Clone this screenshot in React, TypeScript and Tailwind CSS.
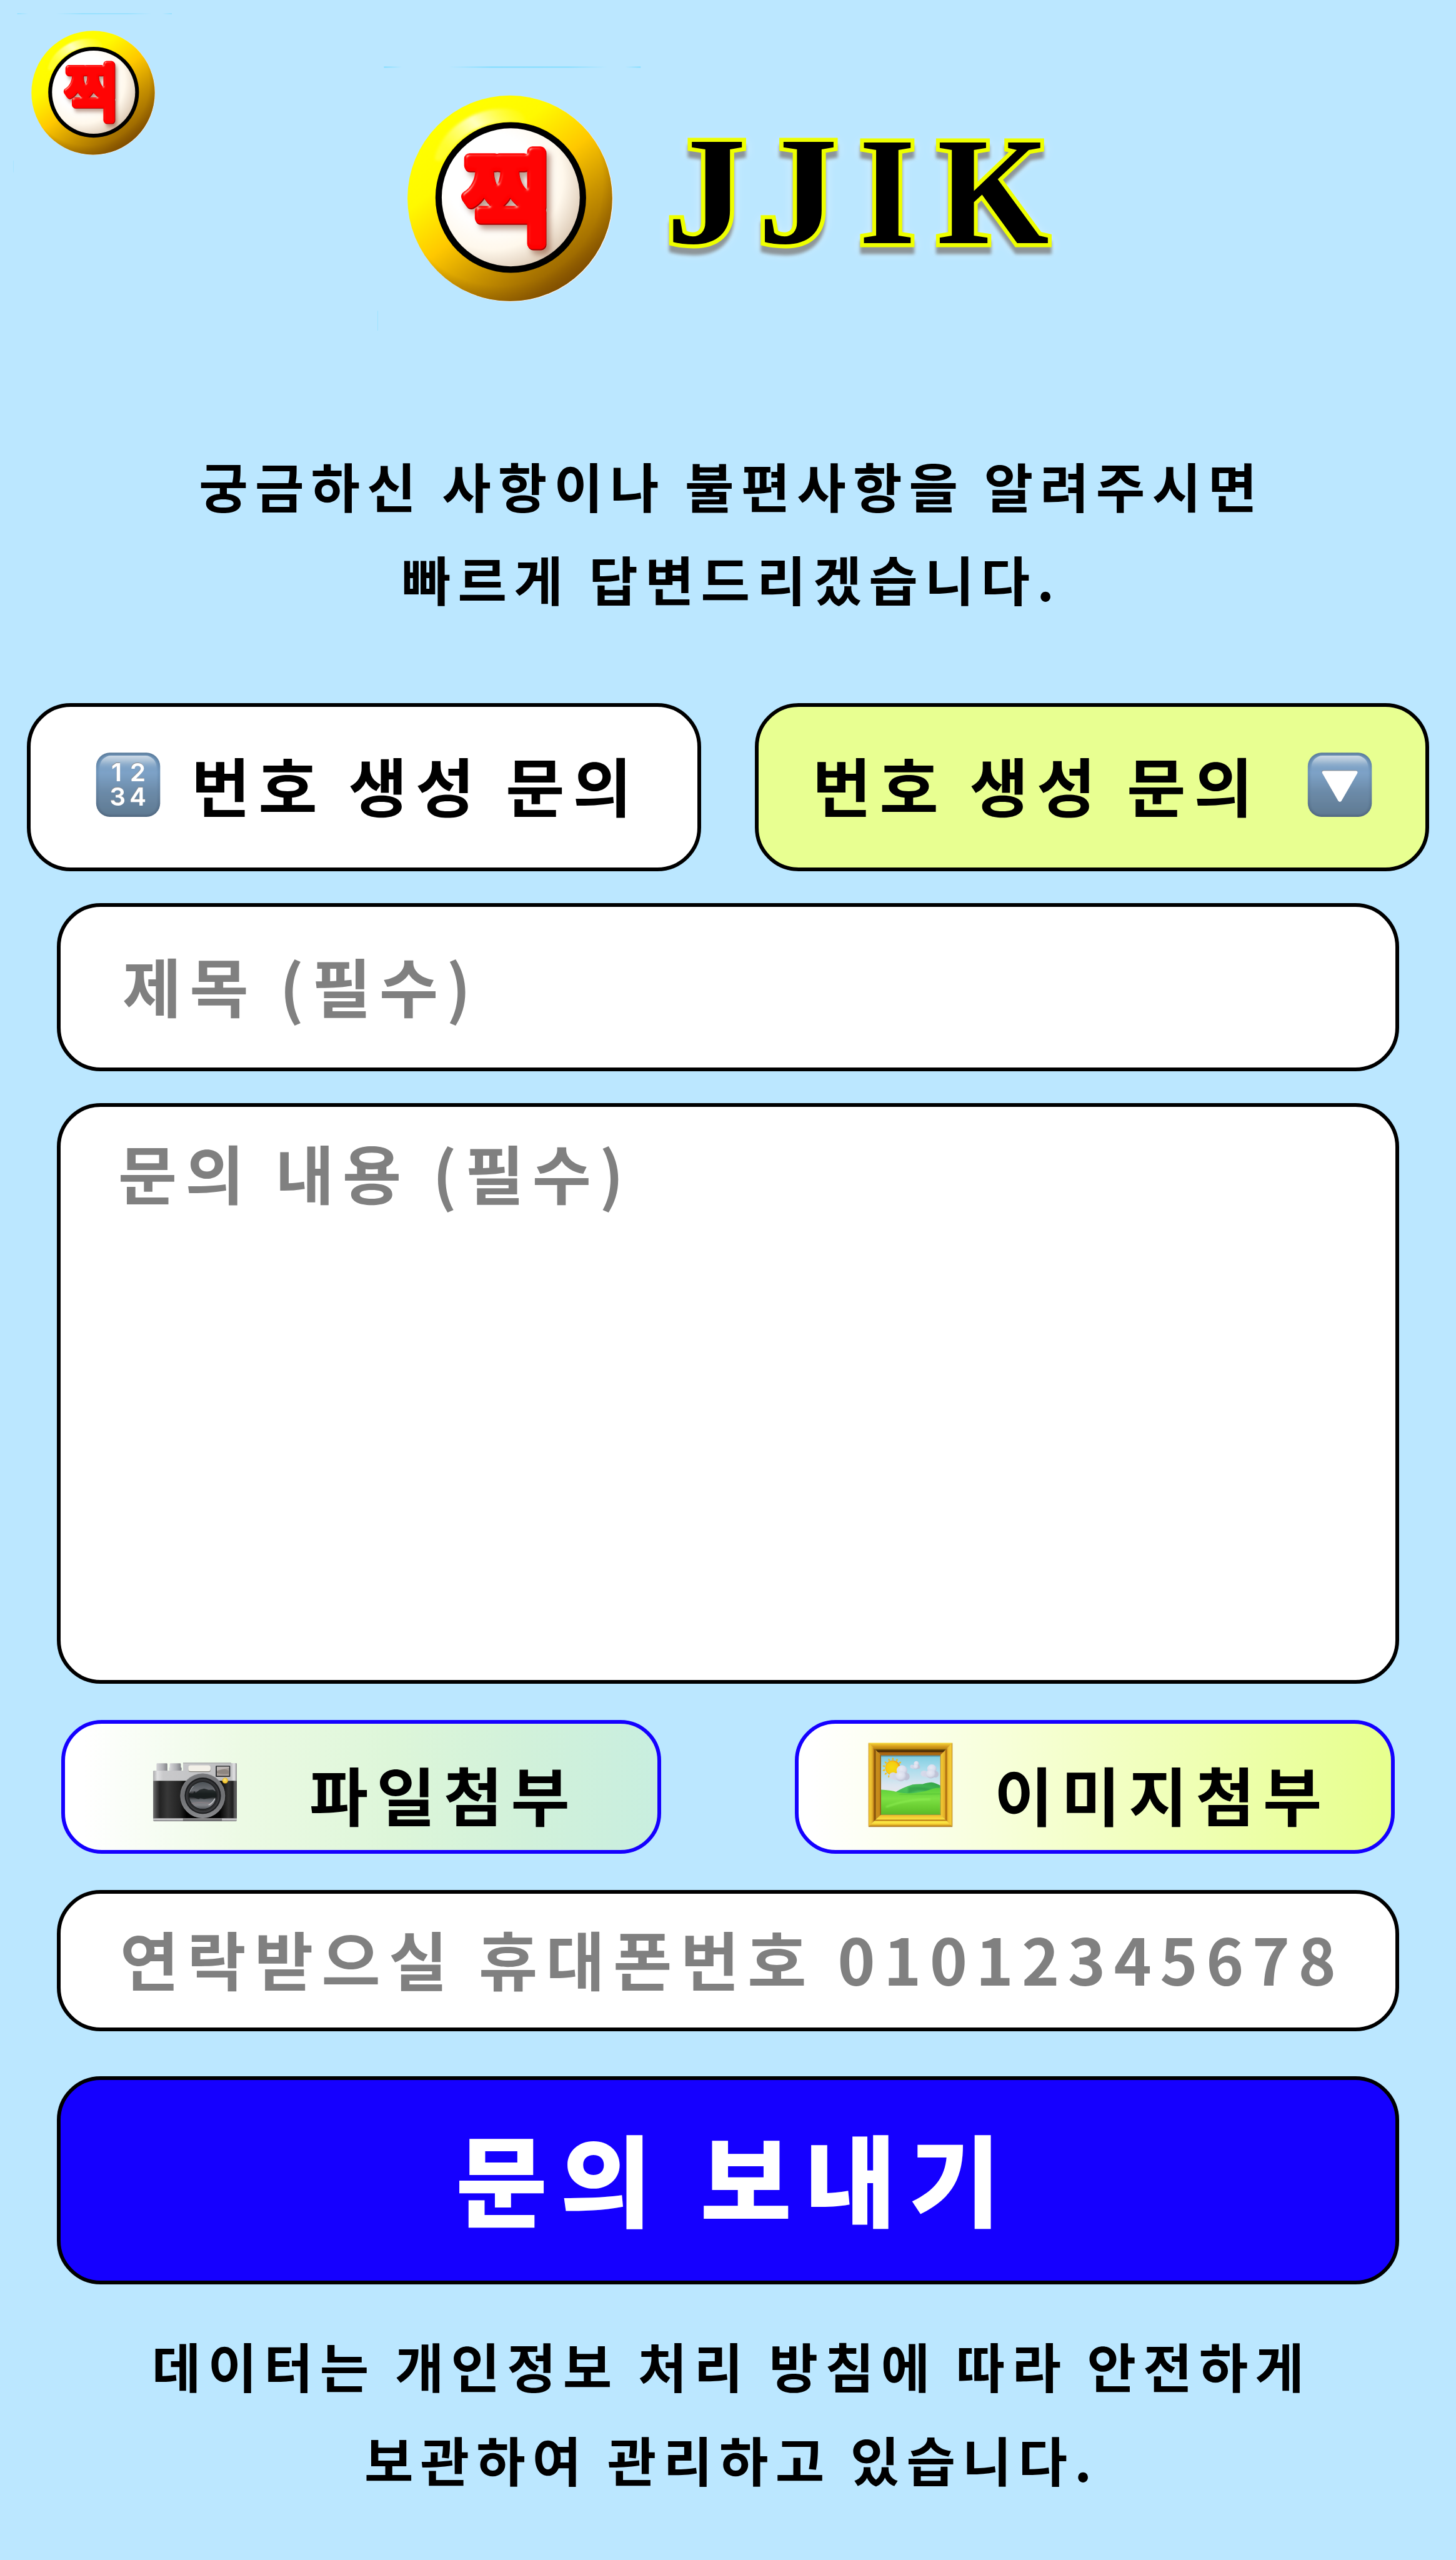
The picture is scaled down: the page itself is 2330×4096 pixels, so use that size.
import type { ReactNode } from "react";

function BallLogo({ id, className }: { id: string; className: string }) {
  return (
    <svg viewBox="0 0 1568 1568" className={className}>
      <defs>
        <linearGradient id={`${id}-body`} x1="0.2" y1="0.1" x2="0.82" y2="0.92">
          <stop offset="0" stopColor="#ffff00" />
          <stop offset="0.24" stopColor="#fff900" />
          <stop offset="0.48" stopColor="#ffc800" />
          <stop offset="0.7" stopColor="#c89200" />
          <stop offset="0.88" stopColor="#a06c00" />
          <stop offset="1" stopColor="#7d4a00" />
        </linearGradient>
        <radialGradient id={`${id}-edge`} cx="0.45" cy="0.42" r="0.6">
          <stop offset="0.84" stopColor="#7a4a00" stopOpacity="0" />
          <stop offset="1" stopColor="#7a4a00" stopOpacity="0.5" />
        </radialGradient>
        <linearGradient id={`${id}-shine`} x1="0" y1="0.5" x2="1" y2="0">
          <stop offset="0" stopColor="#ffff80" stopOpacity="0.35" />
          <stop offset="0.45" stopColor="#ffffc8" stopOpacity="0.95" />
          <stop offset="1" stopColor="#ffff60" stopOpacity="0" />
        </linearGradient>
        <radialGradient id={`${id}-disc`} cx="0.36" cy="0.36" r="0.72">
          <stop offset="0.45" stopColor="#ffffff" />
          <stop offset="0.72" stopColor="#fff8ec" />
          <stop offset="1" stopColor="#d9c5b0" />
        </radialGradient>
        <linearGradient id={`${id}-line`} x1="0" y1="0" x2="1" y2="0">
          <stop offset="0" stopColor="#7adcff" />
          <stop offset="0.07" stopColor="#7adcff" stopOpacity="0" />
          <stop offset="0.25" stopColor="#7adcff" stopOpacity="0" />
          <stop offset="0.42" stopColor="#7adcff" />
          <stop offset="0.72" stopColor="#7adcff" stopOpacity="0.9" />
          <stop offset="0.87" stopColor="#7adcff" stopOpacity="0" />
          <stop offset="0.94" stopColor="#7adcff" stopOpacity="0" />
          <stop offset="1" stopColor="#7adcff" />
        </linearGradient>
        <filter id={`${id}-soft`} x="-30%" y="-30%" width="160%" height="160%">
          <feGaussianBlur stdDeviation="9" />
        </filter>
        <filter id={`${id}-bevel`} x="-20%" y="-20%" width="150%" height="150%" colorInterpolationFilters="sRGB">
          <feGaussianBlur in="SourceAlpha" stdDeviation="22" result="far" />
          <feOffset in="far" dx="30" dy="42" result="farOff" />
          <feFlood floodColor="#7a3a20" floodOpacity="0.5" result="brown" />
          <feComposite in="brown" in2="farOff" operator="in" result="shadow" />
          <feOffset in="SourceAlpha" dx="5" dy="8" result="sideOff" />
          <feFlood floodColor="#a80000" result="dark" />
          <feComposite in="dark" in2="sideOff" operator="in" result="side" />
          <feGaussianBlur in="SourceAlpha" stdDeviation="12" result="b" />
          <feSpecularLighting in="b" surfaceScale="14" specularConstant="0.9" specularExponent="34" lightingColor="#ffd8c8" result="s">
            <feDistantLight azimuth="232" elevation="38" />
          </feSpecularLighting>
          <feComposite in="s" in2="SourceAlpha" operator="in" result="si" />
          <feComposite in="SourceGraphic" in2="si" operator="arithmetic" k1="0" k2="1" k3="0.8" k4="0" result="lit" />
          <feMerge>
            <feMergeNode in="shadow" />
            <feMergeNode in="side" />
            <feMergeNode in="lit" />
          </feMerge>
        </filter>
      </defs>
      <rect x="-114" y="-167" width="1830" height="8" fill={`url(#${id}-line)`} />
      <rect x="-160" y="1575" width="4" height="140" fill="#8fdfff" opacity="0.7" />
      <ellipse cx="788" cy="775" rx="731" ry="734" fill="#fff4ee" />
      <ellipse cx="784" cy="772" rx="730" ry="733" fill={`url(#${id}-body)`} />
      <ellipse cx="784" cy="772" rx="730" ry="733" fill={`url(#${id}-edge)`} />
      <path
        d="M250 480C290 290 520 130 740 132C850 134 900 170 890 236C700 212 500 250 370 420C330 480 300 510 270 505C250 500 246 495 250 480Z"
        fill={`url(#${id}-shine)`}
        filter={`url(#${id}-soft)`}
      />
      <circle cx="790" cy="766" r="537" fill="#000" />
      <circle cx="790" cy="765" r="492" fill={`url(#${id}-disc)`} />
      <text
        transform="translate(764 1036) scale(0.97 1)"
        fontFamily='"Noto Sans CJK KR", sans-serif'
        fontWeight="400"
        fontSize="720"
        letterSpacing="0"
        textAnchor="middle"
        fill="#ff0000"
        stroke="#ff0000"
        strokeWidth="78"
        strokeLinejoin="round"
        strokeLinecap="round"
        filter={`url(#${id}-bevel)`}
      >
        찍
      </text>
    </svg>
  );
}

function Wordmark({ className }: { className: string }) {
  return (
    <svg viewBox="0 0 1400 600" className={className}>
      <defs>
        <filter id="wm-depth" x="-10%" y="-20%" width="120%" height="150%" colorInterpolationFilters="sRGB">
          <feGaussianBlur in="SourceAlpha" stdDeviation="16" result="g" />
          <feOffset in="g" dy="14" result="go" />
          <feFlood floodColor="#ffffff" floodOpacity="0.5" result="white" />
          <feComposite in="white" in2="go" operator="in" result="glow" />
          <feGaussianBlur in="SourceAlpha" stdDeviation="5" result="d" />
          <feOffset in="d" dy="21" result="do" />
          <feFlood floodColor="#777777" floodOpacity="0.75" result="gray" />
          <feComposite in="gray" in2="do" operator="in" result="drop" />
          <feMerge>
            <feMergeNode in="glow" />
            <feMergeNode in="drop" />
            <feMergeNode in="SourceGraphic" />
          </feMerge>
        </filter>
      </defs>
      <g
        filter="url(#wm-depth)"
        fontFamily='"Liberation Serif", "Times New Roman", serif'
        fontWeight="700"
        fontSize="458"
        letterSpacing="0"
        fill="#000"
        stroke="#eeff00"
        strokeWidth="24"
        strokeMiterlimit="6"
        paintOrder="stroke"
      >
        <text transform="translate(99 428.5) scale(1.05 1.01)">J</text>
        <text transform="translate(374 428.5) scale(1.05 1.01)">J</text>
        <text transform="translate(678 428.5) scale(0.95 1.01)">I</text>
        <text transform="translate(913 428.5) scale(0.94 1.01)">K</text>
      </g>
    </svg>
  );
}

function KeyTile({ id, className, children }: { id: string; className: string; children: ReactNode }) {
  return (
    <svg viewBox="0 0 690 690" className={className}>
      <defs>
        <linearGradient id={`${id}-base`} x1="0" y1="0" x2="0" y2="1">
          <stop offset="0" stopColor="#5b7c9c" />
          <stop offset="0.3" stopColor="#6d93b9" />
          <stop offset="0.65" stopColor="#627f9c" />
          <stop offset="1" stopColor="#4f677f" />
        </linearGradient>
        <linearGradient id={`${id}-face`} x1="0" y1="0" x2="0" y2="1">
          <stop offset="0" stopColor="#7298bc" />
          <stop offset="0.3" stopColor="#7da2c7" />
          <stop offset="0.6" stopColor="#6c8ba9" />
          <stop offset="1" stopColor="#5f7a92" />
        </linearGradient>
        <linearGradient id={`${id}-gloss`} x1="0" y1="0" x2="0" y2="1">
          <stop offset="0" stopColor="#cddae7" />
          <stop offset="0.35" stopColor="#b4c8db" stopOpacity="0.85" />
          <stop offset="1" stopColor="#7da2c7" stopOpacity="0" />
        </linearGradient>
        <filter id={`${id}-blur`}>
          <feGaussianBlur stdDeviation="9" />
        </filter>
        <filter id={`${id}-inset`} x="-10%" y="-10%" width="120%" height="120%">
          <feDropShadow dx="-2" dy="-6" stdDeviation="1" floodColor="#8d8d8d" />
        </filter>
      </defs>
      <rect x="55" y="52" width="575" height="576" rx="122" fill={`url(#${id}-base)`} />
      <rect x="76" y="72" width="533" height="540" rx="104" fill={`url(#${id}-face)`} filter={`url(#${id}-blur)`} />
      <path d="M88 215V180A100 102 0 0 1 188 79H497A100 102 0 0 1 597 180V215Z" fill={`url(#${id}-gloss)`} />
      <g fill="#fff" filter={`url(#${id}-inset)`}>
        {children}
      </g>
    </svg>
  );
}

function NumbersIcon({ className }: { className: string }) {
  return (
    <KeyTile id="num" className={className}>
      <g fontFamily="Inter, sans-serif" fontWeight="600" fontSize="226" letterSpacing="0" textAnchor="middle">
        <text x="238" y="310">1</text>
        <text x="430" y="310">2</text>
        <text x="249" y="525">3</text>
        <text x="430" y="525">4</text>
      </g>
    </KeyTile>
  );
}

function DownIcon({ className }: { className: string }) {
  return (
    <KeyTile id="down" className={className}>
      <path d="M198 216H488Q508 217 499 238L358 484Q343 503 328 484L187 238Q178 217 198 216Z" />
    </KeyTile>
  );
}

function CameraIcon({ className }: { className: string }) {
  return (
    <svg viewBox="0 0 870 870" className={className}>
      <defs>
        <linearGradient id="cam-metal" x1="0" y1="0" x2="1" y2="0">
          <stop offset="0" stopColor="#a9a9ab" />
          <stop offset="0.05" stopColor="#e0e0e2" />
          <stop offset="0.12" stopColor="#c9c9cb" />
          <stop offset="0.93" stopColor="#bdbec0" />
          <stop offset="0.97" stopColor="#e4e4e6" />
          <stop offset="1" stopColor="#8b8b8d" />
        </linearGradient>
        <linearGradient id="cam-knob" x1="0" y1="0" x2="1" y2="0">
          <stop offset="0" stopColor="#d5d5d8" />
          <stop offset="0.6" stopColor="#adaeb2" />
          <stop offset="1" stopColor="#828388" />
        </linearGradient>
        <linearGradient id="cam-leather" x1="0" y1="0" x2="1" y2="0">
          <stop offset="0" stopColor="#707070" />
          <stop offset="0.035" stopColor="#4a4a4a" />
          <stop offset="0.08" stopColor="#232323" />
          <stop offset="0.17" stopColor="#383838" />
          <stop offset="0.32" stopColor="#222222" />
          <stop offset="0.4" stopColor="#000000" />
          <stop offset="0.8" stopColor="#050505" />
          <stop offset="0.9" stopColor="#333333" />
          <stop offset="0.95" stopColor="#202020" />
          <stop offset="0.975" stopColor="#5a5a5a" />
          <stop offset="1" stopColor="#555555" />
        </linearGradient>
        <linearGradient id="cam-ring" x1="0" y1="0" x2="0" y2="1">
          <stop offset="0" stopColor="#78797c" />
          <stop offset="0.5" stopColor="#6e6f72" />
          <stop offset="1" stopColor="#88898c" />
        </linearGradient>
        <linearGradient id="cam-glass" x1="0" y1="0" x2="0" y2="1">
          <stop offset="0" stopColor="#4b5055" />
          <stop offset="0.32" stopColor="#6d7075" />
          <stop offset="0.42" stopColor="#2e3032" />
          <stop offset="0.56" stopColor="#222425" />
          <stop offset="0.66" stopColor="#63676c" />
          <stop offset="0.85" stopColor="#85868b" />
          <stop offset="1" stopColor="#55595e" />
        </linearGradient>
        <linearGradient id="cam-base" x1="0" y1="0" x2="0" y2="1">
          <stop offset="0" stopColor="#8b8b8d" />
          <stop offset="0.35" stopColor="#d5d5d7" />
          <stop offset="0.7" stopColor="#aaaaac" />
          <stop offset="1" stopColor="#69696b" />
        </linearGradient>
        <filter id="cam-soft">
          <feGaussianBlur stdDeviation="4" />
        </filter>
        <clipPath id="cam-clip">
          <circle cx="507" cy="470" r="122" />
        </clipPath>
      </defs>
      <rect x="92" y="181" width="98" height="72" rx="8" fill="url(#cam-knob)" />
      <rect x="206" y="218" width="112" height="30" rx="8" fill="url(#cam-knob)" />
      <rect x="211" y="181" width="100" height="60" rx="8" fill="url(#cam-knob)" />
      <path d="M62 338V254Q62 247 70 247H331V177H762V180H807Q814 180 814 188V338Z" fill="url(#cam-metal)" />
      <path d="M331 177H762V181H331Z" fill="#8d8e91" />
      <rect x="62" y="338" width="752" height="340" fill="url(#cam-leather)" />
      <path d="M62 674H814V692Q814 701 804 701H72Q62 701 62 692Z" fill="url(#cam-base)" />
      <rect x="330" y="676" width="350" height="24" fill="#333" opacity="0.45" filter="url(#cam-soft)" />
      <rect x="379" y="202" width="200" height="58" rx="20" fill="#85827b" />
      <rect x="378" y="199" width="200" height="54" rx="20" fill="#f3f0e8" />
      <rect x="624" y="203" width="130" height="100" rx="5" fill="#25272a" />
      <rect x="634" y="212" width="111" height="82" fill="#a79f9a" />
      <path d="M634 256Q660 236 700 234Q725 232 745 252V274Q690 288 634 268Z" fill="#8d8680" />
      <path d="M634 212H745V222L634 244Z" fill="#bdb7b4" />
      <circle cx="507" cy="473" r="201" fill="url(#cam-ring)" />
      <circle cx="507" cy="473" r="199" fill="none" stroke="#929396" strokeWidth="4" opacity="0.7" />
      <circle cx="508" cy="472" r="163" fill="#1d1e20" />
      <circle cx="508" cy="474" r="150" fill="#3a3b3e" />
      <circle cx="508" cy="470" r="140" fill="#2b2c2e" />
      <circle cx="507" cy="470" r="126" fill="#141517" />
      <g clipPath="url(#cam-clip)">
        <rect x="385" y="348" width="244" height="244" fill="url(#cam-glass)" />
        <path
          d="M385 450L420 455L432 430L444 448L478 420L520 408L560 420L600 418L630 440V490L600 486L560 496L520 502L486 494L470 504L430 490L385 480Z"
          fill="#191a1b"
          opacity="0.8"
          filter="url(#cam-soft)"
        />
        <path d="M400 545Q500 520 590 548" stroke="#8f8288" strokeWidth="12" fill="none" opacity="0.6" filter="url(#cam-soft)" />
        <path d="M560 556Q600 536 616 498" stroke="#d8dadd" strokeWidth="7" fill="none" filter="url(#cam-soft)" />
        <path d="M388 444Q398 408 424 386" stroke="#c3c7ca" strokeWidth="5" fill="none" filter="url(#cam-soft)" />
        <path d="M402 540Q412 560 436 574" stroke="#c3c7ca" strokeWidth="5" fill="none" filter="url(#cam-soft)" />
      </g>
      <circle cx="709" cy="338" r="26" fill="#b98310" />
      <circle cx="709" cy="335" r="24" fill="#f2cb3b" />
      <circle cx="706" cy="330" r="13" fill="#f8dc66" filter="url(#cam-soft)" />
    </svg>
  );
}

function Cloud({ transform }: { transform: string }) {
  return (
    <g transform={transform}>
      <ellipse cx="265" cy="350" rx="34" ry="32" fill="#d6d9ea" />
      <ellipse cx="295" cy="358" rx="36" ry="32" fill="#d4d7e8" />
      <ellipse cx="382" cy="356" rx="32" ry="34" fill="#bfc2d6" />
      <circle cx="344" cy="302" r="48" fill="url(#pic-cloud)" />
      <ellipse cx="334" cy="354" rx="48" ry="46" fill="url(#pic-cloud)" />
    </g>
  );
}

function PictureIcon({ className }: { className: string }) {
  const rays = [
    [263, 196, 0],
    [300, 206, 25],
    [329, 230, 55],
    [228, 205, -25],
    [197, 229, -52],
    [181, 262, -78],
    [181, 300, -102],
    [197, 332, -128],
    [227, 356, -152],
  ];
  return (
    <svg viewBox="0 0 870 870" className={className}>
      <defs>
        <linearGradient id="pic-top" x1="0" y1="0" x2="0" y2="1">
          <stop offset="0" stopColor="#f6d838" />
          <stop offset="0.3" stopColor="#d3981c" />
          <stop offset="0.48" stopColor="#b8860f" />
          <stop offset="0.55" stopColor="#6f4c08" />
          <stop offset="0.68" stopColor="#3c2203" />
          <stop offset="0.78" stopColor="#a3620f" />
          <stop offset="0.94" stopColor="#b06d12" />
          <stop offset="1" stopColor="#5b3605" />
        </linearGradient>
        <linearGradient id="pic-left" x1="0" y1="0" x2="1" y2="0">
          <stop offset="0" stopColor="#c98e1c" />
          <stop offset="0.1" stopColor="#f3cd35" />
          <stop offset="0.32" stopColor="#e3b02a" />
          <stop offset="0.45" stopColor="#a9690f" />
          <stop offset="0.53" stopColor="#74480a" />
          <stop offset="0.62" stopColor="#c88f1d" />
          <stop offset="0.9" stopColor="#c58718" />
          <stop offset="1" stopColor="#6b3f06" />
        </linearGradient>
        <linearGradient id="pic-right" x1="0" y1="0" x2="1" y2="0">
          <stop offset="0" stopColor="#8a560c" />
          <stop offset="0.06" stopColor="#f4cd35" />
          <stop offset="0.38" stopColor="#dfab27" />
          <stop offset="0.46" stopColor="#a8660e" />
          <stop offset="0.54" stopColor="#bb7d15" />
          <stop offset="0.62" stopColor="#eebd2e" />
          <stop offset="0.9" stopColor="#f5cf38" />
          <stop offset="1" stopColor="#b67b18" />
        </linearGradient>
        <linearGradient id="pic-bottom" x1="0" y1="0" x2="0" y2="1">
          <stop offset="0" stopColor="#8a560c" />
          <stop offset="0.05" stopColor="#eebc2c" />
          <stop offset="0.38" stopColor="#f8e23f" />
          <stop offset="0.45" stopColor="#aa6610" />
          <stop offset="0.5" stopColor="#d9a120" />
          <stop offset="0.58" stopColor="#fbee48" />
          <stop offset="0.78" stopColor="#f6cf33" />
          <stop offset="1" stopColor="#a96a10" />
        </linearGradient>
        <linearGradient id="pic-sky" x1="0" y1="0" x2="0" y2="1">
          <stop offset="0" stopColor="#3d7c90" />
          <stop offset="0.05" stopColor="#84cfe2" />
          <stop offset="0.35" stopColor="#a9dcec" />
          <stop offset="0.8" stopColor="#dde6f0" />
          <stop offset="1" stopColor="#e8e6ee" />
        </linearGradient>
        <linearGradient id="pic-hill" x1="0" y1="0" x2="0" y2="1">
          <stop offset="0" stopColor="#5ccf3a" />
          <stop offset="0.4" stopColor="#7de044" />
          <stop offset="0.75" stopColor="#68cc30" />
          <stop offset="1" stopColor="#5cb82a" />
        </linearGradient>
        <linearGradient id="pic-far" x1="0" y1="1" x2="1" y2="0">
          <stop offset="0" stopColor="#3bb851" />
          <stop offset="0.5" stopColor="#4cc25a" />
          <stop offset="1" stopColor="#2fa045" />
        </linearGradient>
        <radialGradient id="pic-cloud" cx="0.42" cy="0.35" r="0.65">
          <stop offset="0" stopColor="#e8eaf4" />
          <stop offset="0.6" stopColor="#dadeed" />
          <stop offset="1" stopColor="#bcc0d4" />
        </radialGradient>
        <radialGradient id="pic-sun" cx="0.45" cy="0.5" r="0.55">
          <stop offset="0" stopColor="#f4dc12" />
          <stop offset="0.7" stopColor="#f6cd12" />
          <stop offset="1" stopColor="#ee8f14" />
        </radialGradient>
        <filter id="pic-soft">
          <feGaussianBlur stdDeviation="6" />
        </filter>
        <clipPath id="pic-clip">
          <rect x="156" y="166" width="533" height="533" />
        </clipPath>
      </defs>
      <rect x="45" y="58" width="753" height="752" fill="#a9834a" opacity="0.6" />
      <path d="M43 54H798L689 166H156Z" fill="url(#pic-top)" />
      <path d="M43 54L156 166V699L43 807Z" fill="url(#pic-left)" />
      <path d="M798 54V807L689 699V166Z" fill="url(#pic-right)" />
      <path d="M43 807L156 699H689L798 807Z" fill="url(#pic-bottom)" />
      <g clipPath="url(#pic-clip)">
        <rect x="156" y="166" width="533" height="340" fill="url(#pic-sky)" />
        {rays.map(([x, y, a]) => (
          <path key={`${x}-${y}`} d="M0 -12Q16 10 0 12Q-16 10 0 -12Z" transform={`translate(${x} ${y}) rotate(${a})`} fill="#f3bd12" />
        ))}
        <circle cx="262" cy="278" r="68" fill="url(#pic-sun)" />
        <Cloud transform="translate(0 0)" />
        <Cloud transform="translate(310 29) scale(0.88 0.86)" />
        <Cloud transform="translate(305 91) scale(0.49 0.5)" />
        <path d="M280 500Q350 455 440 428Q480 422 530 424Q580 408 610 408Q640 412 689 436V560H280Z" fill="url(#pic-far)" />
        <path d="M400 450Q520 440 610 470L560 486Q500 470 400 510Z" fill="#2b9545" opacity="0.6" filter="url(#pic-soft)" />
        <path d="M156 474Q240 476 300 496Q380 516 470 502Q560 490 620 466Q660 456 689 458V700H156Z" fill="url(#pic-hill)" />
        <path d="M200 630Q380 560 600 560" stroke="#8dee52" strokeWidth="16" fill="none" opacity="0.7" filter="url(#pic-soft)" />
        <path d="M320 520Q470 520 689 510" stroke="#56c437" strokeWidth="14" fill="none" opacity="0.7" filter="url(#pic-soft)" />
        <path d="M156 166V699" stroke="#1d3b1a" strokeWidth="10" opacity="0.6" filter="url(#pic-soft)" />
      </g>
    </svg>
  );
}

export default function App() {
  return (
    <div className="flex h-[4096px] w-[2330px] flex-col overflow-hidden bg-[#bbe7ff] font-['Noto_Sans_CJK_KR',sans-serif] font-bold leading-none text-black">
      <header className="flex h-[702px] shrink-0 items-start">
        <BallLogo id="mini" className="mt-[44px] ml-[43px] size-[212px] overflow-visible" />
        <BallLogo id="main" className="mt-[144px] ml-[385px] size-[352px] overflow-visible" />
        <Wordmark className="mt-[160px] ml-[21px] h-[320px] w-[747px] overflow-visible" />
      </header>

      <p className="pl-[11px] text-center text-[85.35px] leading-[149.2px] tracking-[0.13em]">
        궁금하신 사항이나 불편사항을 알려주시면
        <br />
        빠르게 답변드리겠습니다.
      </p>

      <div className="mx-[43px] mt-[125px] flex justify-between text-[102.4px]">
        <button className="flex h-[269px] w-[1079px] items-center rounded-[70px] border-[6px] border-black bg-white pl-[95px] tracking-[0.13em]">
          <NumbersIcon className="mb-[6px] size-[123px]" />
          <span className="mb-[11px] ml-[39px] whitespace-nowrap">번호 생성 문의</span>
        </button>
        <button className="flex h-[269px] w-[1079px] items-center rounded-[70px] border-[6px] border-black bg-[#e8ff91] pl-[86px] tracking-[0.13em]">
          <span className="mb-[11px] whitespace-nowrap">번호 생성 문의</span>
          <DownIcon className="mb-[6px] ml-[65px] size-[123px]" />
        </button>
      </div>

      <div className="mx-[91px] mt-[51px] flex h-[269px] items-center rounded-[70px] border-[6px] border-black bg-white pb-[10px] pl-[99px] text-[102.4px] tracking-[0.13em] text-[#808080]">
        제목 (필수)
      </div>

      <div className="mx-[91px] mt-[51px] h-[929px] rounded-[70px] border-[6px] border-black bg-white pt-[52px] pl-[92px] text-[102.4px] tracking-[0.13em] text-[#808080]">
        문의 내용 (필수)
      </div>

      <div className="mx-[98px] mt-[58px] flex justify-between text-[102.4px]">
        <button className="flex h-[214px] w-[960px] items-start rounded-[65px] border-[6px] border-[#1500ff] bg-[linear-gradient(90deg,#ffffff_3%,#ecfae4_30%,#ddf6d9_55%,#d1f1da_78%,#c8eedf_100%)] pl-[130px] tracking-[0.13em]">
          <CameraIcon className="mt-[31px] size-[155px]" />
          <span className="mt-[60px] ml-[106px] whitespace-nowrap">파일첨부</span>
        </button>
        <button className="flex h-[214px] w-[960px] items-start rounded-[65px] border-[6px] border-[#1500ff] bg-[linear-gradient(90deg,#ffffff_2%,#e7ff8f_98%)] pl-[104px] tracking-[0.13em]">
          <PictureIcon className="mt-[21px] size-[155px]" />
          <span className="mt-[60px] ml-[54px] whitespace-nowrap">이미지첨부</span>
        </button>
      </div>

      <div className="mx-[91px] mt-[58px] flex h-[226px] items-center rounded-[70px] border-[6px] border-black bg-white pb-[10px] pl-[95px] text-[102.4px] tracking-[0.13em] whitespace-nowrap text-[#808080]">
        연락받으실 휴대폰번호 01012345678
      </div>

      <button className="mx-[91px] mt-[72px] h-[333px] shrink-0 rounded-[70px] border-[6px] border-black bg-[#1500ff] pb-[13px] pl-[21px] text-center text-[159px] font-black tracking-[0.13em] text-white">
        문의 보내기
      </button>

      <p className="mt-[55px] pl-[11px] text-center text-[85.35px] leading-[149.2px] tracking-[0.13em]">
        데이터는 개인정보 처리 방침에 따라 안전하게
        <br />
        보관하여 관리하고 있습니다.
      </p>
    </div>
  );
}
